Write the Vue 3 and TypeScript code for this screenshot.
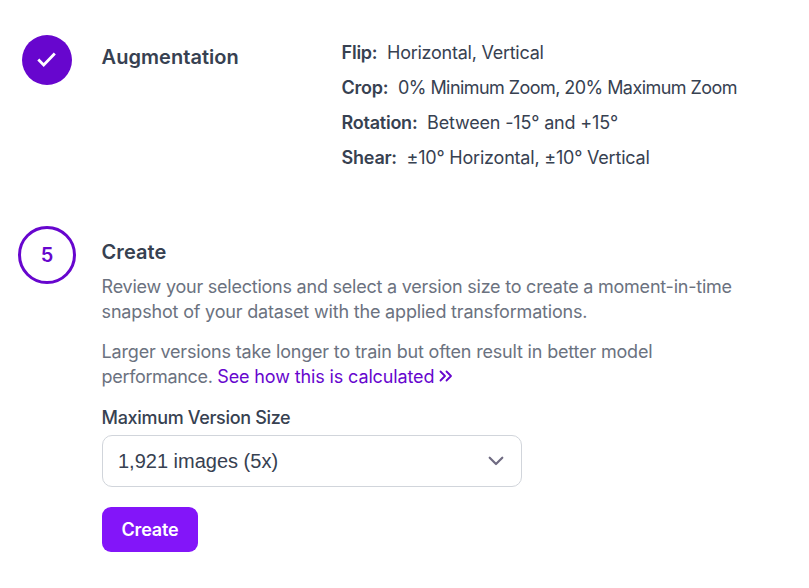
<script setup lang="ts">
interface Setting {
  label: string
  value: string
  key: string
}

const settings: Setting[] = [
  { key: 'flip', label: 'Flip:', value: 'Horizontal, Vertical' },
  { key: 'crop', label: 'Crop:', value: '0% Minimum Zoom, 20% Maximum Zoom' },
  { key: 'rotation', label: 'Rotation:', value: 'Between -15° and +15°' },
  { key: 'shear', label: 'Shear:', value: '±10° Horizontal, ±10° Vertical' },
]
</script>

<template>
  <main class="steps">
    <section class="step first">
      <div class="marker done">
        <svg width="20" height="16" viewBox="0 0 20 16" fill="none" stroke="#fff" stroke-width="2.8">
          <path d="M1.3 7.6 L6.7 12.9 L17.8 1.5" />
        </svg>
      </div>
      <h2 class="title">Augmentation</h2>
      <dl class="settings">
        <div v-for="s in settings" :key="s.key" class="setting" :class="s.key">
          <dt>{{ s.label }}</dt>
          <dd>{{ s.value }}</dd>
        </div>
      </dl>
    </section>
    <section class="step second">
      <div class="marker current">5</div>
      <div class="content">
        <h2 class="title">Create</h2>
        <p class="text intro"><span class="line-a">Review your selections and select a version size to create a moment-in-time</span><br />snapshot of your dataset with the applied transformations.</p>
        <p class="text">Larger versions take longer to train but often result in better model<br /><span class="line-d">performance. </span><a class="link">See how this is calculated
          <svg width="14" height="14" viewBox="0 0 14 14" fill="none" stroke="currentColor" stroke-width="1.8" stroke-linecap="round" stroke-linejoin="round"><path d="M1.5 2.5 L6 7 L1.5 11.5 M7.5 2.5 L12 7 L7.5 11.5" /></svg></a></p>
        <label class="label">Maximum Version Size</label>
        <div class="select">
          <span>1,921 images (5x)</span>
          <svg width="16" height="10" viewBox="0 0 16 10" fill="none" stroke="#6f6b82" stroke-width="2.2" stroke-linecap="round" stroke-linejoin="round"><path d="M1.7 1.7 L8 8 L14.3 1.7" /></svg>
        </div>
        <button class="create" type="button">Create</button>
      </div>
    </section>
  </main>
</template>

<style>
body { margin: 0; background: #fff; }
</style>
<style scoped>
.steps { box-sizing: border-box; width: 809px; height: 588px; overflow: hidden; font-family: Inter, "Liberation Sans", sans-serif; color: #374151; }
.step { display: flex; align-items: flex-start; }
.first { height: 226px; padding-left: 22px; box-sizing: border-box; padding-top: 35px; }
.second { padding-left: 18px; }
.marker { box-sizing: border-box; display: flex; align-items: center; justify-content: center; border-radius: 50%; flex: none; }
.done { width: 50px; height: 50px; background: #6706ce; margin-right: 29.6px; }
.current { width: 58px; height: 58px; border: 3px solid #6706ce; color: #6706ce; font-size: 20px; font-weight: 600; margin-right: 25.6px; }
.title { margin: 0; font-size: 20px; font-weight: 600; line-height: 30px; letter-spacing: 0.04px; }
.first .title { width: 240px; margin-top: 7px; }
.settings { margin: 0; }
.setting { display: flex; gap: 9.7px; height: 35px; line-height: 35px; font-size: 18px; white-space: nowrap; }
dt { font-weight: 600; letter-spacing: -0.25px; }
dd { margin: 0; letter-spacing: -0.25px; }
.crop dd { letter-spacing: -0.56px; }
.rotation dd { letter-spacing: -0.17px; }
.shear dd { letter-spacing: -0.21px; }
.content { display: flex; flex-direction: column; align-items: flex-start; padding-top: 11px; }
.text { margin: 0; font-size: 18px; line-height: 25px; color: #6b7280; white-space: nowrap; letter-spacing: -0.18px; }
.line-a { letter-spacing: -0.23px; }
.line-d { letter-spacing: -0.34px; }
.intro { margin: 7px 0 15px; }
.link { color: #6706ce; letter-spacing: -0.13px; }
.link svg { margin-left: 0; }
.label { margin-top: 16px; font-size: 18px; line-height: 26px; font-weight: 500; letter-spacing: -0.33px; }
.select { box-sizing: border-box; width: 420px; height: 52px; margin: 4px 0 0 0.4px; padding: 0 17px 0 15px; display: flex; align-items: center; justify-content: space-between; border: 1px solid #d1d5db; border-radius: 10px; font-family: "Liberation Sans", Arial, sans-serif; font-size: 20px; }
.create { width: 96px; height: 45px; margin: 20px 0 0 0.4px; padding: 0; border: 0; border-radius: 9px; background: #8315f9; color: #fff; font: 600 18px Inter, sans-serif; letter-spacing: -0.15px; }
</style>
